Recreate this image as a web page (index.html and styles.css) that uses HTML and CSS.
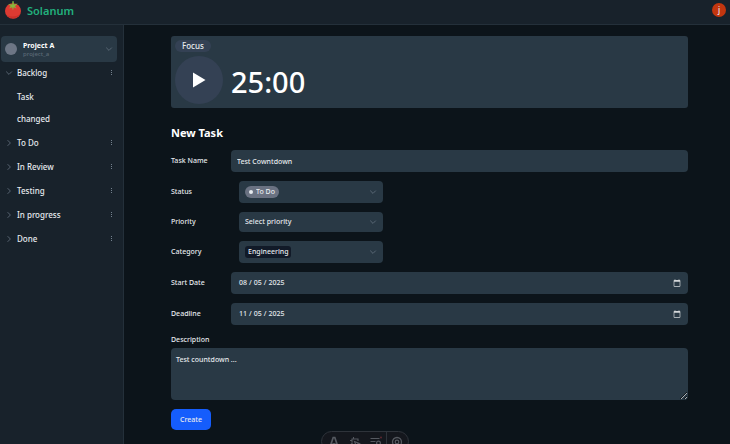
FILE: index.html
```html
<!DOCTYPE html>
<html lang="en">
<head>
<meta charset="utf-8">
<title>Solanum</title>
<link rel="stylesheet" href="styles.css">
</head>
<body>
<svg class="defs" aria-hidden="true">
  <symbol id="down" viewBox="0 0 8 8"><path d="M1.2 2.6 4 5.4 6.8 2.6" fill="none" stroke="currentColor" stroke-width=".9"/></symbol>
  <symbol id="right" viewBox="0 0 8 8"><path d="M2.6 1.2 5.4 4 2.6 6.8" fill="none" stroke="currentColor" stroke-width=".9"/></symbol>
  <symbol id="dots" viewBox="0 0 8 8"><path d="M4 1h1v1h-1zM4 3h1v1h-1zM4 5h1v1h-1z" fill="currentColor"/></symbol>
</svg>
<header class="topbar">
  <a class="brand" href="#">
    <svg class="logo" viewBox="0 0 18 18" aria-hidden="true">
      <ellipse cx="9" cy="10" rx="8" ry="7.8" fill="#dc3a32"/>
      <path d="M3 14.5a8 7.8 0 0 0 13.6-2.2C13.500 15.800 8 16.500 3 14.500z" fill="#c93029"/>
      <path d="M8.300.2h1.500v3.300l3.900-.9-2.800 2.600 1.800 2.400-3-1.300L9 9.400 8.100 6.300l-3 1.300 1.600-2.500L4 2.900l4.300.7z" fill="#86b83c"/>
    </svg>
    <span>Solanum</span>
  </a>
  <button class="avatar" type="button" aria-label="Account">j</button>
</header>
<div class="shell">
  <nav class="sidebar" aria-label="Tasks">
    <button class="project" type="button">
      <span class="project-dot"></span>
      <span class="project-text"><b>Project A</b><small>project_a</small></span>
      <svg class="icon"><use href="#down"/></svg>
    </button>
    <div class="group"><svg class="icon"><use href="#down"/></svg><span>Backlog</span><button type="button" aria-label="Backlog options"><svg class="icon menu"><use href="#dots"/></svg></button></div>
    <ul class="tasks">
      <li><a href="#">Task</a></li>
      <li><a href="#">changed</a></li>
    </ul>
    <div class="group"><svg class="icon"><use href="#right"/></svg><span>To Do</span><button type="button" aria-label="To Do options"><svg class="icon menu"><use href="#dots"/></svg></button></div>
    <div class="group"><svg class="icon"><use href="#right"/></svg><span>In Review</span><button type="button" aria-label="In Review options"><svg class="icon menu"><use href="#dots"/></svg></button></div>
    <div class="group"><svg class="icon"><use href="#right"/></svg><span>Testing</span><button type="button" aria-label="Testing options"><svg class="icon menu"><use href="#dots"/></svg></button></div>
    <div class="group"><svg class="icon"><use href="#right"/></svg><span>In progress</span><button type="button" aria-label="In progress options"><svg class="icon menu"><use href="#dots"/></svg></button></div>
    <div class="group"><svg class="icon"><use href="#right"/></svg><span>Done</span><button type="button" aria-label="Done options"><svg class="icon menu"><use href="#dots"/></svg></button></div>
  </nav>
  <main class="content">
    <section class="timer">
      <span class="mode">Focus</span>
      <div class="clock">
        <button class="play" type="button" aria-label="Start"><svg viewBox="0 0 14 16"><path d="M1 .5 13.500 8 1 15.500z" fill="#fff"/></svg></button>
        <time>25:00</time>
      </div>
    </section>
    <h1>New Task</h1>
    <form class="form">
      <div class="row">
        <label for="name">Task Name</label>
        <input class="field" id="name" type="text" value="Test Cowntdown">
      </div>
      <div class="row">
        <label for="status">Status</label>
        <div class="picker status">
          <span class="pill"></span>
          <select id="status"><option>To Do</option></select>
          <svg class="icon"><use href="#down"/></svg>
        </div>
      </div>
      <div class="row">
        <label for="priority">Priority</label>
        <div class="picker priority">
          <select id="priority"><option>Select priority</option></select>
          <svg class="icon"><use href="#down"/></svg>
        </div>
      </div>
      <div class="row">
        <label for="category">Category</label>
        <div class="picker category">
          <span class="tag"></span>
          <select id="category"><option>Engineering</option></select>
          <svg class="icon"><use href="#down"/></svg>
        </div>
      </div>
      <div class="row">
        <label for="start">Start Date</label>
        <input class="field" id="start" type="date" value="2025-08-05">
      </div>
      <div class="row">
        <label for="deadline">Deadline</label>
        <input class="field" id="deadline" type="date" value="2025-11-05">
      </div>
      <label class="block-label" for="description">Description</label>
      <textarea class="field" id="description">Test countdown ...</textarea>
      <button class="create" type="submit">Create</button>
    </form>
  </main>
</div>
<div class="devbar" role="toolbar" aria-label="Developer tools">
  <button type="button" aria-label="Home"><svg viewBox="0 0 12 12"><path d="M2 11 5.200 1.500h1.600L10 11M4 9q2-2 4 0v2" fill="none" stroke="currentColor" stroke-width="1.700"/></svg></button>
  <button type="button" aria-label="Inspect"><svg viewBox="0 0 12 12"><path d="M5.500 5.500 10.500 7.500 8.300 8.300 7.500 10.500zM3 6.500V3h6v2M4.500 1v2M1 4.500h2M1.500 9l2-2" fill="none" stroke="currentColor" stroke-width="1.100"/></svg></button>
  <button type="button" aria-label="Audit"><svg viewBox="0 0 12 12"><path d="M.5 2.500h9M.5 5.500h5M.5 8.500h4" fill="none" stroke="currentColor" stroke-width="1.200"/><circle cx="8.500" cy="7" r="1.900" fill="none" stroke="currentColor" stroke-width="1.200"/><circle cx="11" cy="1.500" r="1" fill="#5d2730"/></svg></button>
  <button class="last" type="button" aria-label="Settings"><svg viewBox="0 0 12 12"><circle cx="6" cy="6" r="4.500" fill="none" stroke="currentColor" stroke-width="1.300"/><circle cx="6" cy="6" r="1.800" fill="none" stroke="currentColor" stroke-width="1.200"/></svg></button>
</div>
</body>
</html>
```
FILE: styles.css
```css
* { box-sizing: border-box; }

:root {
  color-scheme: dark;
  --panel: #18222b;
  --surface: #293945;
  --line: #24303a;
  --text: #e6eaee;
  --muted: #5d6b78;
}

body {
  margin: 0;
  height: 100vh;
  overflow: hidden;
  display: flex;
  flex-direction: column;
  background: #0c141a;
  color: var(--text);
  font: 500 7px/12px "Noto Sans", "Open Sans", sans-serif;
}

button, input, select, textarea { font: inherit; color: inherit; }
button { border: 0; padding: 0; background: none; }
a { color: inherit; text-decoration: none; }
.defs { position: absolute; width: 0; height: 0; }
.icon { display: block; width: 8px; height: 8px; flex: none; color: var(--muted); }
.menu { color: #73818e; }

.topbar {
  flex: none;
  height: 25px;
  padding: 0 4px 4px;
  display: flex;
  align-items: center;
  justify-content: space-between;
  background: var(--panel);
  border-bottom: 1px solid var(--line);
}
.brand {
  display: flex;
  align-items: center;
  gap: 5px;
  color: #22b07d;
  font-size: 11px;
  line-height: 16px;
  font-weight: 600;
}
.brand span { padding-top: 2px; }
.logo { width: 18px; height: 18px; }
.avatar {
  width: 14px;
  height: 14px;
  border-radius: 50%;
  background: #c2360f;
  font-size: 8px;
  line-height: 14px;
}

.shell { flex: 1; min-height: 0; display: flex; }
.sidebar {
  flex: none;
  width: 124px;
  padding: 11px 6px 0 1px;
  background: var(--panel);
  border-right: 1px solid var(--line);
}
.project {
  width: 100%;
  height: 26px;
  padding: 0 4px;
  display: flex;
  align-items: center;
  gap: 6px;
  border-radius: 4px;
  background: var(--surface);
  text-align: left;
}
.project-dot { width: 12px; height: 12px; border-radius: 50%; background: #6d7685; }
.project-text { flex: 1; padding-top: 1px; display: flex; flex-direction: column; line-height: 9px; }
.project-text b { color: #fff; font-weight: 700; }
.project-text small { font-size: 6px; color: #5b6976; }
.group {
  height: 24px;
  padding: 0 2px 2px 4px;
  display: flex;
  align-items: center;
  gap: 4px;
  font-size: 8px;
}
.group span { flex: 1; }
.tasks { margin: 0; padding: 0 0 2px 16px; list-style: none; font-size: 8px; line-height: 22px; }

.content { flex: 1; min-width: 0; padding: 11px 42px 0 47px; }
.timer {
  height: 72px;
  padding: 4px;
  border-radius: 3px;
  background: var(--surface);
  display: flex;
  flex-direction: column;
  align-items: flex-start;
  gap: 4px;
}
.mode { padding: 0 7px; border-radius: 6px; background: #344154; font-size: 8px; }
.clock { display: flex; align-items: center; gap: 8px; }
.play {
  width: 48px;
  height: 48px;
  border-radius: 50%;
  background: #344154;
  display: grid;
  place-items: center;
}
.play svg { width: 14px; height: 16px; }
.clock time { padding-top: 4px; font-size: 29px; line-height: 44px; color: #fff; }
h1 { margin: 17px 0 9px; font-size: 11px; line-height: 16px; font-weight: 700; color: #fff; }

.form { display: flex; flex-direction: column; align-items: stretch; }
.row { display: grid; grid-template-columns: 60px 1fr; align-items: center; margin-bottom: 9px; }
.field {
  width: 100%;
  height: 22px;
  padding: 0 6px;
  border: 0;
  border-radius: 4px;
  background: var(--surface);
}
input[type="date"] { padding: 0 7px; }
input::-webkit-datetime-edit-text { padding: 0 1px; }
input::-webkit-datetime-edit-fields-wrapper { padding: 0; }
input::-webkit-calendar-picker-indicator { width: 8px; height: 8px; padding: 0; opacity: .8; }
.picker {
  position: relative;
  width: 144px;
  height: 22px;
  margin-left: 8px;
  padding-right: 6px;
  display: flex;
  align-items: center;
  border-radius: 4px;
  background: var(--surface);
}
.picker.priority { height: 20px; }
.picker select {
  position: relative;
  flex: 1;
  height: 100%;
  padding: 0 0 0 6px;
  border: 0;
  appearance: none;
  background: transparent;
}
.picker.status select { padding-left: 17px; }
.picker.category select { padding-left: 9px; }
.pill, .tag { position: absolute; left: 6px; height: 12px; }
.pill { width: 34px; border-radius: 6px; background: #6a7282; }
.pill::before {
  content: "";
  position: absolute;
  left: 4px;
  top: 4px;
  width: 4px;
  height: 4px;
  border-radius: 50%;
  background: #e6eaee;
}
.tag { width: 46px; border-radius: 3px; background: #111a28; }
.block-label { margin: 0 0 2px; }
textarea.field { height: 52px; padding: 6px 5px; display: block; resize: vertical; }
.create {
  align-self: flex-start;
  margin-top: 9px;
  padding: 0 9px;
  line-height: 21px;
  border-radius: 5px;
  background: #155dfc;
}

.devbar {
  position: absolute;
  left: 50%;
  bottom: -8px;
  transform: translateX(-50%);
  display: flex;
  height: 21px;
  padding: 0 1px;
  border: 1px solid #2e333a;
  border-radius: 11px;
  background: #14171d;
  color: #555960;
}
.devbar button { width: 21px; display: grid; place-items: center; }
.devbar svg { width: 12px; height: 12px; }
.devbar .last { border-left: 1px solid #2e333a; }
```
